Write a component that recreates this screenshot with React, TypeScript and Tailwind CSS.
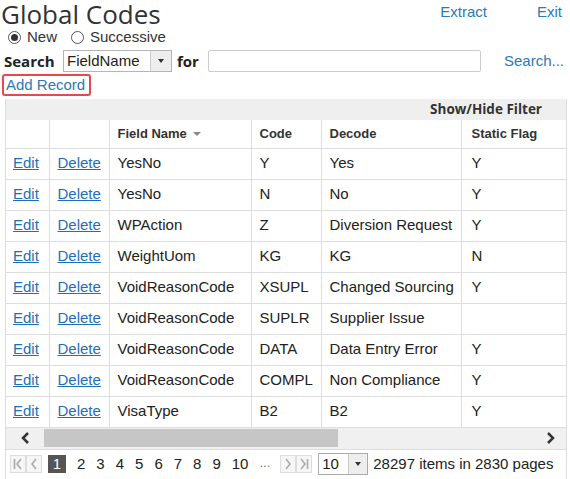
import React from 'react';

const rows = [
  ['YesNo', 'Y', 'Yes', 'Y'],
  ['YesNo', 'N', 'No', 'Y'],
  ['WPAction', 'Z', 'Diversion Request', 'Y'],
  ['WeightUom', 'KG', 'KG', 'N'],
  ['VoidReasonCode', 'XSUPL', 'Changed Sourcing', 'Y'],
  ['VoidReasonCode', 'SUPLR', 'Supplier Issue', ''],
  ['VoidReasonCode', 'DATA', 'Data Entry Error', 'Y'],
  ['VoidReasonCode', 'COMPL', 'Non Compliance', 'Y'],
  ['VisaType', 'B2', 'B2', 'Y'],
];

const ui = { fontFamily: '"Open Sans", "DejaVu Sans", sans-serif' };
const arial = { fontFamily: '"Liberation Sans", Arial, sans-serif' };

function Radio({ checked, label }: { checked?: boolean; label: string }) {
  return (
    <label className="flex items-center gap-[6px] mr-[14px]">
      <span className="w-[13px] h-[13px] rounded-full border border-[#555] bg-white flex items-center justify-center">
        {checked && <span className="w-[7px] h-[7px] rounded-full bg-[#333]" />}
      </span>
      <span className="leading-[18px]">{label}</span>
    </label>
  );
}

function PagerBtn({ children }: { children: React.ReactNode }) {
  return (
    <span className="w-[16px] h-[18px] border border-[#ddd] bg-[#f6f6f6] flex items-center justify-center text-[#aaa]">
      {children}
    </span>
  );
}

export default function App() {
  return (
    <div className="w-[570px] h-[479px] bg-white overflow-hidden text-[#222]" style={arial}>
      <div className="flex items-start justify-between h-[28px]">
        <h1 className="text-[26px] leading-[28px] pl-[1px] text-[#333]" style={ui}>Global Codes</h1>
        <div className="flex gap-[50px] pr-[8px] pt-[1px] text-[15px] text-[#2a7ab8]">
          <span>Extract</span>
          <span>Exit</span>
        </div>
      </div>

      <div className="flex items-center pl-[8px] h-[18px] text-[15px] text-[#333]">
        <Radio checked label="New" />
        <Radio label="Successive" />
      </div>

      <div className="flex items-center h-[24px] mt-[3px] pl-[4px]">
        <span className="font-bold text-[15px] w-[59px]" style={ui}>Search</span>
        <div className="flex h-[22px] w-[109px] border border-[#b5b5b5] bg-white">
          <span className="flex-1 text-[15px] leading-[20px] pl-[3px]">FieldName</span>
          <span className="w-[21px] bg-[#eee] border-l border-[#ccc] flex items-center justify-center">
            <span className="w-0 h-0 border-l-[3px] border-r-[3px] border-t-[4px] border-l-transparent border-r-transparent border-t-[#333]" />
          </span>
        </div>
        <span className="font-bold text-[15px] ml-[5px] w-[31px]" style={ui}>for</span>
        <div className="w-[273px] h-[22px] border border-[#ccc] rounded-[2px] bg-white" />
        <span className="ml-[23px] text-[15px] text-[#2a7ab8]">Search...</span>
      </div>

      <div className="mt-[1px] ml-[2px] w-[89px] h-[22px] border-2 border-[#e5484d] rounded-[3px] flex items-center">
        <span className="text-[15px] text-[#2a7ab8] pl-[2px]">Add Record</span>
      </div>

      <div className="ml-[5px] mt-[3px] w-[562px] border-l border-r border-[#ddd] overflow-hidden">
        <div className="h-[21px] bg-[#efefef] flex items-center justify-end pr-[24px] text-[13.5px] font-bold text-[#333]" style={ui}>
          Show/Hide Filter
        </div>
        <table className="border-collapse table-fixed w-[600px]">
          <colgroup>
            <col className="w-[43px]" />
            <col className="w-[60px]" />
            <col className="w-[142px]" />
            <col className="w-[70px]" />
            <col className="w-[140px]" />
            <col className="w-[145px]" />
          </colgroup>
          <thead>
            <tr className="h-[28px]">
              <th className="border-r border-b border-[#ddd]" />
              <th className="border-r border-b border-[#ddd]" />
              <th className="border-r border-b border-[#ddd] text-left pl-[8px] text-[13px] font-bold text-[#333]">
                <span className="inline-flex items-center gap-[6px]">
                  Field Name
                  <span className="w-0 h-0 border-l-[4px] border-r-[4px] border-t-[4px] border-l-transparent border-r-transparent border-t-[#888]" />
                </span>
              </th>
              <th className="border-r border-b border-[#ddd] text-left pl-[8px] text-[13px] font-bold text-[#333]">Code</th>
              <th className="border-r border-b border-[#ddd] text-left pl-[8px] text-[13px] font-bold text-[#333]">Decode</th>
              <th className="border-b border-[#ddd] text-left pl-[10px] text-[13px] font-bold text-[#333]">Static Flag</th>
            </tr>
          </thead>
          <tbody>
            {rows.map((r, i) => (
              <tr key={i} className="h-[31px] text-[15px]">
                <td className="border-r border-b border-[#ddd] pl-[7px]">
                  <span className="text-[#1e70b5] underline">Edit</span>
                </td>
                <td className="border-r border-b border-[#ddd] pl-[8px]">
                  <span className="text-[#1e70b5] underline">Delete</span>
                </td>
                <td className="border-r border-b border-[#ddd] pl-[8px] whitespace-nowrap">{r[0]}</td>
                <td className="border-r border-b border-[#ddd] pl-[8px] whitespace-nowrap">{r[1]}</td>
                <td className="border-r border-b border-[#ddd] pl-[8px] whitespace-nowrap overflow-hidden">{r[2]}</td>
                <td className="border-b border-[#ddd] pl-[10px]">{r[3]}</td>
              </tr>
            ))}
          </tbody>
        </table>

        <div className="h-[22px] bg-[#f0f0f0] flex items-center border-b border-[#ddd]">
          <span className="w-[38px] flex justify-center">
            <svg width="10" height="12" viewBox="0 0 10 12"><path d="M8 1 L3 6 L8 11" stroke="#333" strokeWidth="2.5" fill="none" /></svg>
          </span>
          <span className="w-[294px] h-[18px] bg-[#c6c6c6]" />
          <span className="flex-1" />
          <span className="w-[30px] flex justify-center">
            <svg width="10" height="12" viewBox="0 0 10 12"><path d="M2 1 L7 6 L2 11" stroke="#333" strokeWidth="2.5" fill="none" /></svg>
          </span>
        </div>

        <div className="h-[30px] flex items-center pl-[4px] text-[15px] border-b border-[#ddd]">
          <div className="flex">
            <PagerBtn>
              <svg width="10" height="12" viewBox="0 0 10 12"><path d="M1.5 1 V11 M8 1 L4 6 L8 11" stroke="#aaa" strokeWidth="1.6" fill="none" /></svg>
            </PagerBtn>
            <PagerBtn>
              <svg width="8" height="12" viewBox="0 0 8 12"><path d="M6 1 L2 6 L6 11" stroke="#aaa" strokeWidth="1.6" fill="none" /></svg>
            </PagerBtn>
          </div>
          <span className="ml-[6px] w-[18px] h-[18px] bg-[#555] text-white flex items-center justify-center">1</span>
          <div className="flex gap-[11px] ml-[11px] text-[#222]">
            {['2', '3', '4', '5', '6', '7', '8', '9', '10'].map((n) => (
              <span key={n}>{n}</span>
            ))}
            <span className="text-[#777] text-[13px]">...</span>
          </div>
          <div className="flex ml-[10px]">
            <PagerBtn>
              <svg width="8" height="12" viewBox="0 0 8 12"><path d="M2 1 L6 6 L2 11" stroke="#aaa" strokeWidth="1.6" fill="none" /></svg>
            </PagerBtn>
            <PagerBtn>
              <svg width="10" height="12" viewBox="0 0 10 12"><path d="M2 1 L6 6 L2 11 M8.5 1 V11" stroke="#aaa" strokeWidth="1.6" fill="none" /></svg>
            </PagerBtn>
          </div>
          <div className="ml-[6px] flex h-[22px] w-[50px] border border-[#aaa] bg-white">
            <span className="flex-1 pl-[3px] leading-[20px]">10</span>
            <span className="w-[19px] bg-[#eee] border-l border-[#ccc] flex items-center justify-center">
              <span className="w-0 h-0 border-l-[3px] border-r-[3px] border-t-[4px] border-l-transparent border-r-transparent border-t-[#333]" />
            </span>
          </div>
          <span className="ml-[5px] whitespace-nowrap">28297 items in 2830 pages</span>
        </div>
      </div>
    </div>
  );
}
